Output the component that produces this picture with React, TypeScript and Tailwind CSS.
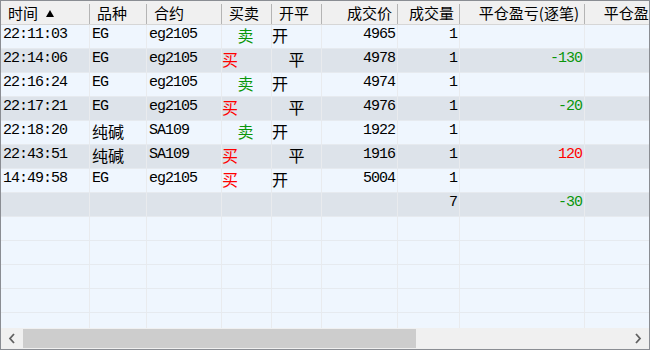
import React from 'react'

type Col = { w: string; label: string; right?: boolean }

const cols: Col[] = [
  { w: 'w-[89px]', label: '时间' },
  { w: 'w-[57px]', label: '品种' },
  { w: 'w-[75px]', label: '合约' },
  { w: 'w-[50px]', label: '买卖' },
  { w: 'w-[50px]', label: '开平' },
  { w: 'w-[76px]', label: '成交价', right: true },
  { w: 'w-[62px]', label: '成交量', right: true },
  { w: 'w-[125px]', label: '平仓盈亏(逐笔)', right: true },
  { w: 'w-[125px]', label: '平仓盈亏(逐日)', right: true },
]

const trades = [
  ['22:11:03', 'EG', 'eg2105', '卖', '开', '4965', '1', '', ''],
  ['22:14:06', 'EG', 'eg2105', '买', '平', '4978', '1', '-130', ''],
  ['22:16:24', 'EG', 'eg2105', '卖', '开', '4974', '1', '', ''],
  ['22:17:21', 'EG', 'eg2105', '买', '平', '4976', '1', '-20', ''],
  ['22:18:20', '纯碱', 'SA109', '卖', '开', '1922', '1', '', ''],
  ['22:43:51', '纯碱', 'SA109', '买', '平', '1916', '1', '120', ''],
  ['14:49:58', 'EG', 'eg2105', '买', '开', '5004', '1', '', ''],
  ['', '', '', '', '', '', '7', '-30', ''],
]

const mono = "font-['Liberation_Mono',monospace] text-[15px] tracking-[-1px] leading-[18px] pb-[3px]"
const cjk = "font-['Noto_Sans_CJK_SC',sans-serif] text-[16px] leading-[20px] pb-[3px]"

function Cell({ col, ci, value }: { col: Col; ci: number; value: string }) {
  let cls = `${col.w} shrink-0 h-full border-r border-[#e9ebee] whitespace-nowrap flex items-center `
  let text = 'text-black'
  if (ci === 3) {
    // buy sits left, sell is centred
    cls += value === '卖' ? 'justify-center pr-[2px] ' : 'justify-start '
    text = value === '卖' ? 'text-[#0a960a]' : 'text-[#ff0000]'
  } else if (ci === 4) {
    cls += value === '平' ? 'justify-center ' : 'justify-start '
  } else if (col.right) {
    cls += 'justify-end pr-[2px] '
    if (ci >= 7 && value.startsWith('-')) text = 'text-[#0a960a]'
    else if (ci >= 7 && value) text = 'text-[#ff0000]'
  } else {
    cls += 'justify-start pl-[2px] '
  }
  const isCjk = /[\u4e00-\u9fff]/.test(value)
  return (
    <div className={cls}>
      <span className={`${isCjk ? cjk : mono} ${text}`}>{value}</span>
    </div>
  )
}

function SortArrow() {
  return (
    <svg width="8" height="7" viewBox="0 0 8 7" className="ml-[8px] mb-[2px]">
      <path d="M4 0 L8 7 L0 7 Z" fill="#000" />
    </svg>
  )
}

function Chevron({ dir }: { dir: 'left' | 'right' }) {
  return (
    <svg width="8" height="11" viewBox="0 0 8 11">
      <path
        d={dir === 'left' ? 'M6 1 L2 5.5 L6 10' : 'M2 1 L6 5.5 L2 10'}
        stroke="#606060"
        strokeWidth="1.8"
        fill="none"
      />
    </svg>
  )
}

export default function App() {
  const emptyRows = Array.from({ length: 5 })
  return (
    <div className="w-[650px] h-[350px] border border-[#8a8d93] bg-[#eff6fe] flex flex-col overflow-hidden">
      <div className="flex-1 overflow-hidden">
        {/* Header */}
        <div className="flex items-end h-[24px] bg-[#f0f0f0] border-b border-[#d6d6d6]">
          {cols.map((c, i) => (
            <div
              key={c.label}
              className={`${c.w} shrink-0 h-[20px] border-r border-[#b4b4b4] flex items-center whitespace-nowrap font-['Noto_Sans_CJK_SC',sans-serif] text-[15px] text-black ${
                c.right ? 'justify-end pr-[5px]' : 'justify-start pl-[7px]'
              }`}
            >
              <span className="leading-[18px] pb-[3px]">{c.label}</span>
              {i === 0 && <SortArrow />}
            </div>
          ))}
        </div>

        {/* Rows */}
        {trades.map((row, ri) => (
          <div
            key={ri}
            className={`flex h-[24px] border-b border-[#e6eaef] ${ri % 2 === 0 ? 'bg-[#eff6fe]' : 'bg-[#dde3ea]'}`}
          >
            {cols.map((c, ci) => (
              <Cell key={ci} col={c} ci={ci} value={row[ci]} />
            ))}
          </div>
        ))}

        {emptyRows.map((_, ri) => (
          <div key={'e' + ri} className="flex h-[24px] border-b border-[#e6eaef] bg-[#eff6fe]">
            {cols.map((c, ci) => (
              <div key={ci} className={`${c.w} shrink-0 h-full border-r border-[#e9ebee]`} />
            ))}
          </div>
        ))}
      </div>

      {/* Horizontal scrollbar */}
      <div className="h-[21px] shrink-0 bg-[#f0f0f0] flex items-center">
        <div className="w-[22px] h-full flex items-center justify-center">
          <Chevron dir="left" />
        </div>
        <div className="flex-1 h-full py-[1px]">
          <div className="w-[393px] h-full bg-[#cdcdcd]" />
        </div>
        <div className="w-[22px] h-full flex items-center justify-center">
          <Chevron dir="right" />
        </div>
      </div>
    </div>
  )
}
